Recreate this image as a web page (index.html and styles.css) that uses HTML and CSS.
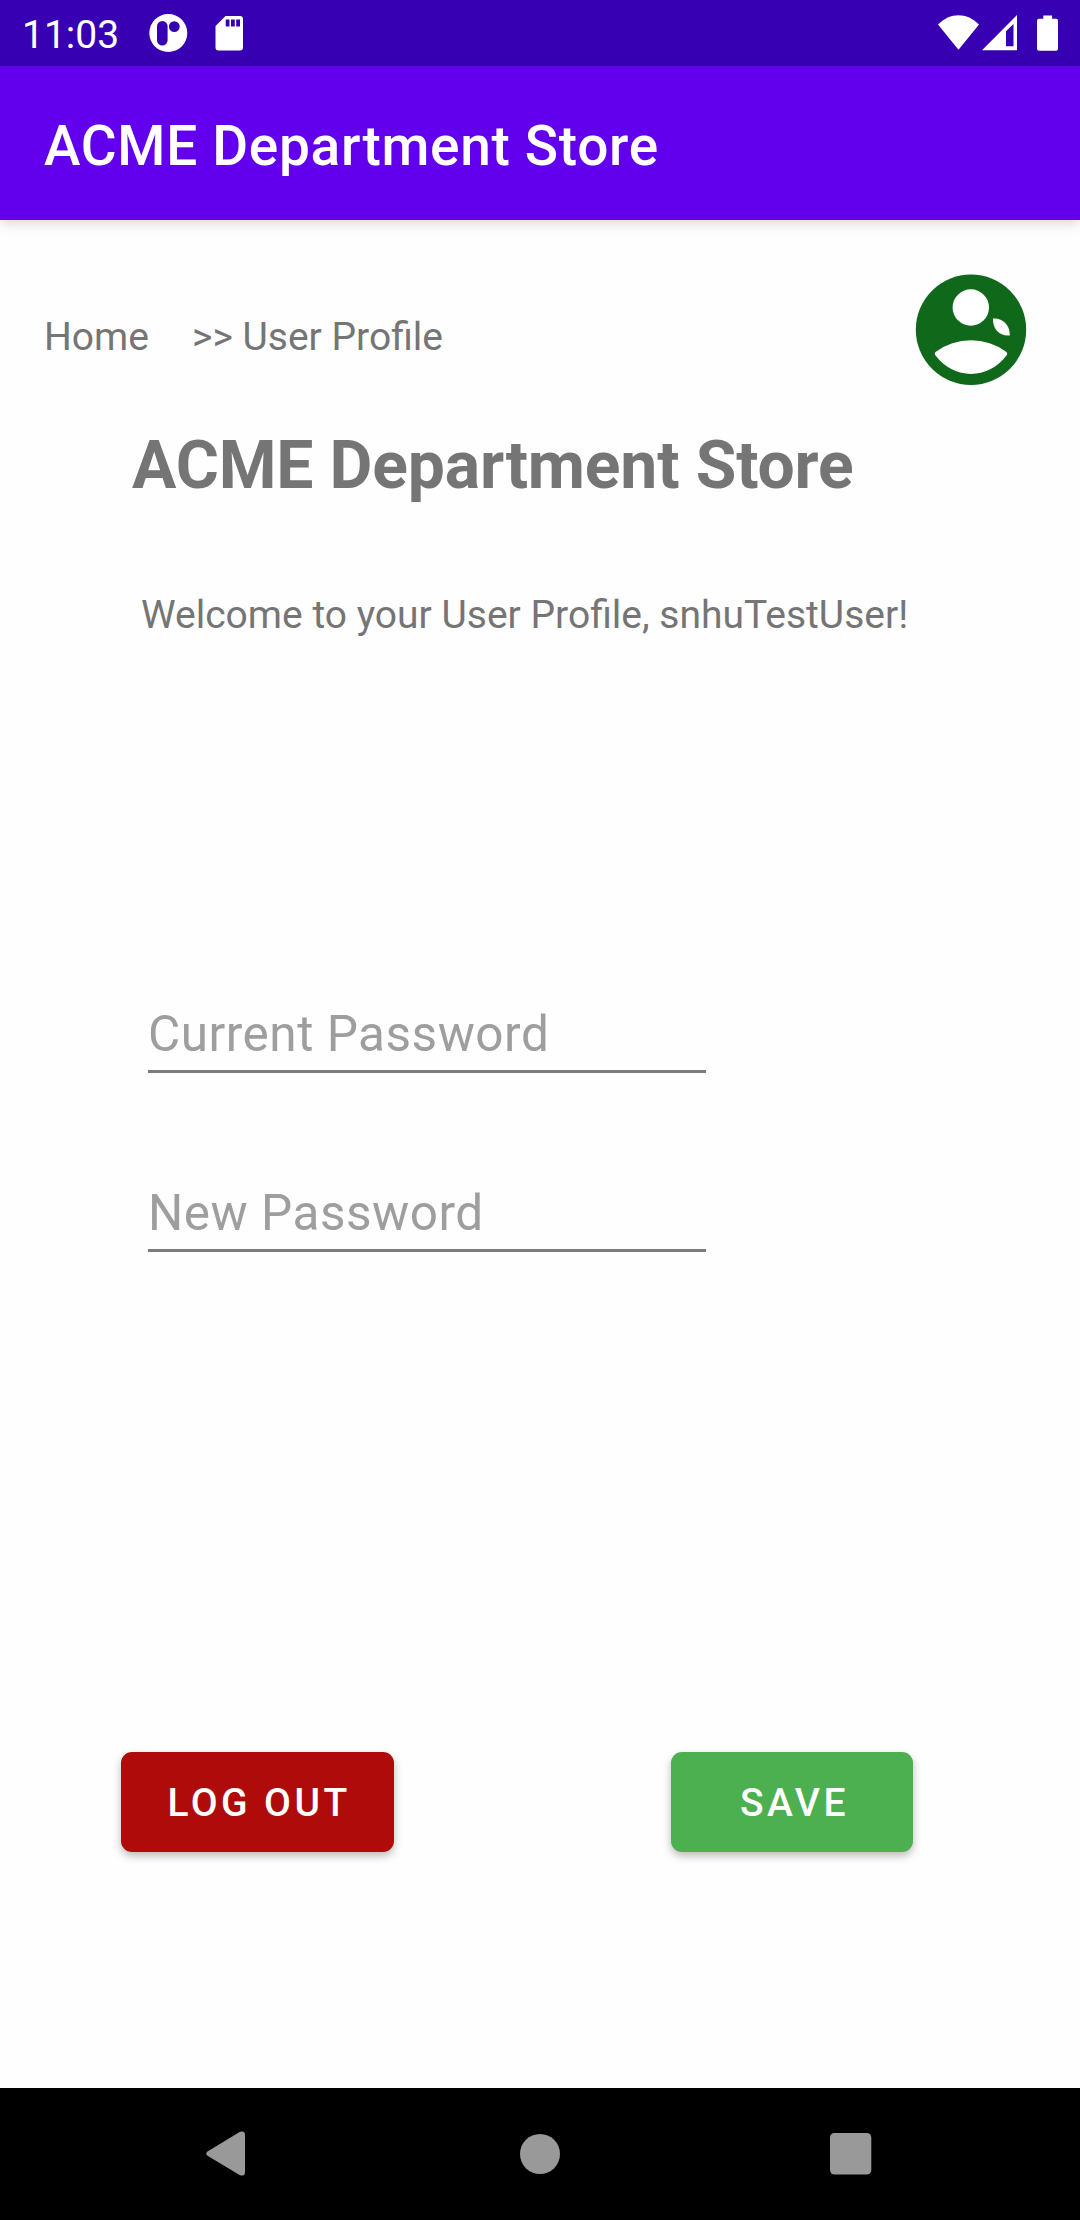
FILE: index.html
```html
<!DOCTYPE html>
<html lang="en">
<head>
<meta charset="utf-8">
<title>ACME Department Store</title>
<link rel="stylesheet" href="styles.css">
</head>
<body>
<div class="screen">
  <div class="status-bar">
    <span class="clock">11:03</span>
    <svg class="notification-icons" width="96" height="66" viewBox="148 0 96 66" fill="#fff">
      <path fill-rule="evenodd" d="M168.300 14a19 19 0 1 1 0 38a19 19 0 1 1 0-38zM157 26.300v14.000a5.300 5.300 0 0 0 10.600 0v-14.000a5.300 5.300 0 0 0-10.600 0zM174.300 21.200a5.400 5.400 0 1 0 0 10.800a5.400 5.400 0 1 0 0-10.800z"/>
      <path fill-rule="evenodd" d="M225.500 16h14.500a3 3 0 0 1 3 3v28.500a3 3 0 0 1-3 3h-21.500a3 3 0 0 1-3-3v-21.500zM225.700 19.500v7h3.800v-7zM231 19.500v7h3.800v-7zM236.200 19.500v7h3.800v-7z"/>
    </svg>
    <svg class="system-icons" width="122" height="66" viewBox="937 0 122 66" fill="#fff">
      <path d="M958.500 49.700L938 24.500C950 12 967 12 979 24.500z"/>
      <path fill-rule="evenodd" d="M982 50.200L1017 15v35.200zM1006 31.300V46.300h7.500V24z"/>
      <path d="M1043.300 15.500h8.800v3.300h3.900a2 2 0 0 1 2 2v28a2 2 0 0 1-2 2h-17a2 2 0 0 1-2-2v-28a2 2 0 0 1 2-2h4.300z"/>
    </svg>
  </div>
  <header class="app-bar">ACME Department Store</header>
  <main class="content">
    <div class="top-row">
      <nav class="breadcrumb"><span class="crumb-home">Home</span><span class="crumb-current">&gt;&gt; User Profile</span></nav>
      <svg class="avatar" width="112" height="112" viewBox="915 273 112 112">
        <circle cx="971" cy="329.700" r="55.200" fill="#10691b"/>
        <g fill="#fff">
          <circle cx="970.800" cy="307.500" r="18.200"/>
          <path d="M935.500 352A60 60 0 0 1 1006.500 352Q1008 353.500 1006.500 355.500C988 380 954 380 935.500 355.500Q934 353.500 935.500 352z"/>
          <path d="M993 318.500C1003 318 1010 325 1009.800 335.500C999.500 336.500 992.500 329 993 318.500z"/>
        </g>
      </svg>
    </div>
    <h1 class="heading">ACME Department Store</h1>
    <p class="welcome">Welcome to your User Profile, snhuTestUser!</p>
    <form class="password-form">
      <input class="field" type="text" placeholder="Current Password">
      <input class="field" type="text" placeholder="New Password">
    </form>
    <div class="actions">
      <button class="button logout" type="button">LOG OUT</button>
      <button class="button save" type="button">SAVE</button>
    </div>
  </main>
  <div class="nav-bar">
    <svg width="40" height="46" viewBox="0 0 40 46" fill="#999"><path d="M1.500 20.500L34 .8Q39 -.8 39 4V41Q39 45.800 34 44.200L1.500 24.700Q-1 22.600 1.500 20.500z"/></svg>
    <svg class="nav-home" width="40" height="40" viewBox="0 0 40 40" fill="#999"><circle cx="20" cy="20" r="20"/></svg>
    <svg width="42" height="42" viewBox="0 0 42 42" fill="#999"><rect width="41.300" height="41.500" rx="4.500"/></svg>
  </div>
</div>
</body>
</html>
```
FILE: styles.css
```css
* { box-sizing: border-box; }
body { margin: 0; font-family: Roboto, sans-serif; background: #fefefe; }
svg { display: block; flex: none; }

.screen { display: flex; flex-direction: column; width: 1080px; height: 2220px; overflow: hidden; }

.status-bar { display: flex; height: 66px; background: #3700b3; color: #fff; }
.clock { width: 126px; margin-left: 22px; padding-top: 12px; font-size: 39px; line-height: 46px; }
.system-icons { margin-left: auto; margin-right: 21px; }

.app-bar {
  height: 154px;
  padding: 48px 44px 0;
  background: #6200ee;
  color: #fff;
  font-size: 55px;
  font-weight: 500;
  line-height: 64px;
  letter-spacing: .6875px;
  box-shadow: 0 3px 12px rgba(0, 0, 0, .16);
}

.content { flex: 1; color: #757575; }
.top-row { display: flex; justify-content: space-between; padding: 53px 53px 0 44px; }
.breadcrumb { display: flex; padding-top: 41px; font-size: 39px; line-height: 46px; }
.crumb-home { width: 148px; }

.heading { margin: 42px 0 0 132px; font-size: 66px; line-height: 77px; font-weight: 700; letter-spacing: -.14px; }
.welcome { margin: 88px 0 0 141px; font-size: 39px; line-height: 46px; }

.password-form { display: flex; flex-direction: column; gap: 97px; width: 558px; margin: 353px 0 0 148px; }
.field {
  height: 82px;
  padding: 12px 0 5px;
  border: 0;
  border-bottom: 3px solid #7c7c7c;
  background: none;
  font: 49.500px/62px Roboto, sans-serif;
  letter-spacing: .5px;
}
.field::placeholder { color: #9e9e9e; opacity: 1; }

.actions { display: flex; justify-content: space-between; margin: 500px 167px 0 121px; }
.button {
  height: 100px;
  padding: 2px 0 0 3px;
  border: 0;
  border-radius: 11px;
  color: #fff;
  font: 500 39px/46px Roboto, sans-serif;
  letter-spacing: 3.440px;
  box-shadow: 0 4px 8px rgba(0, 0, 0, .27);
}
.logout { width: 273px; background: #b00b0b; }
.save { width: 242px; padding-left: 5px; background: #4caf50; }

.nav-bar {
  display: flex;
  justify-content: space-between;
  align-items: center;
  height: 132px;
  padding: 0 208px 0 206px;
  background: #000;
}
.nav-home { margin-left: 4px; }
```
